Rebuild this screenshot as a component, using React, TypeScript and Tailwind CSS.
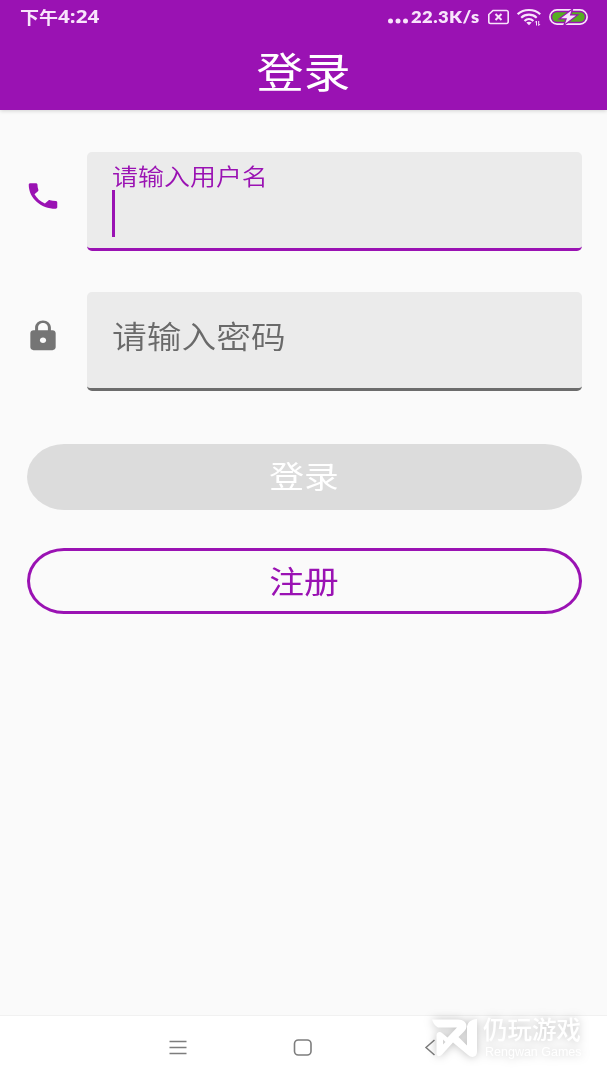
import type { ReactNode } from "react";

const PHONE_PATH =
  "M6.62 10.79c1.44 2.83 3.76 5.14 6.59 6.59l2.2-2.2c.27-.27.67-.36 1.02-.24 1.12.37 2.33.57 3.57.57.55 0 1 .45 1 1V20c0 .55-.45 1-1 1-9.39 0-17-7.61-17-17 0-.55.45-1 1-1h3.5c.55 0 1 .45 1 1 0 1.25.2 2.45.57 3.57.11.35.03.74-.25 1.02l-2.2 2.2z";
const LOCK_PATH =
  "M18 8h-1V6c0-2.76-2.24-5-5-5S7 3.24 7 6v2H6c-1.1 0-2 .9-2 2v10c0 1.1.9 2 2 2h12c1.1 0 2-.9 2-2V10c0-1.1-.9-2-2-2zm-6 9c-1.1 0-2-.9-2-2s.9-2 2-2 2 .9 2 2-.9 2-2 2zm3.1-9H8.9V6c0-1.71 1.39-3.1 3.1-3.1 1.71 0 3.1 1.39 3.1 3.1v2z";

type FieldRowProps = {
  path: string;
  iconClass: string;
  boxClass: string;
  children: ReactNode;
};

const FieldRow = ({ path, iconClass, boxClass, children }: FieldRowProps) => {
  return (
    <div className="flex h-[99px] items-start pr-[25px]">
      <div className="w-[86.5px] shrink-0 pt-[27px]">
        <svg
          viewBox="0 0 24 24"
          preserveAspectRatio="none"
          className={`ml-6 h-[34px] w-[38px] ${iconClass}`}
        >
          <path d={path} fill="currentColor" />
        </svg>
      </div>
      <div
        className={`h-full flex-1 overflow-hidden rounded-[5px] border-b-[3px] bg-[#ebebeb] pl-[25px] ${boxClass}`}
      >
        {children}
      </div>
    </div>
  );
};

const StatusBar = () => {
  return (
    <div className="flex h-[33px] items-center justify-between pl-[20px] pr-[19px] text-[#f8e4fb]">
      <span className="flex items-center whitespace-nowrap leading-none">
        <span className="w-[38px] origin-left scale-x-[1.12] font-['Noto_Sans_CJK_SC',sans-serif] text-[17px] font-bold leading-none">
          下午
        </span>
        <span className="origin-left scale-x-[1.18] font-['Open_Sans',sans-serif] text-[17.5px] font-bold leading-none">
          4:24
        </span>
      </span>
      <div className="flex items-center">
        <svg viewBox="0 0 22 6" className="mr-px mt-[9px] h-[6px] w-[22px]">
          <circle cx="2.5" cy="3" r="2.5" fill="currentColor" />
          <circle cx="10" cy="3" r="2.5" fill="currentColor" />
          <circle cx="17.5" cy="3" r="2.5" fill="currentColor" />
        </svg>
        <span className="flex h-[18px] w-[71px] items-center whitespace-nowrap">
          <span className="origin-left scale-x-[1.05] font-['Lato',sans-serif] text-[17.5px] font-extrabold leading-none tracking-[0.4px]">
            22.3K/s
          </span>
        </span>
        <svg viewBox="0 0 22 16" className="ml-[6px] h-4 w-[22px]" fill="none" stroke="currentColor">
          <path d="M5 1.5H18.5a1.7 1.7 0 0 1 1.7 1.7v9.6a1.7 1.7 0 0 1-1.7 1.7H2.5a1.7 1.7 0 0 1-1.7-1.7V5.5z" strokeWidth="1.6" />
          <path d="M7.5 5l6 6M13.5 5l-6 6" strokeWidth="2" />
        </svg>
        <svg viewBox="0 0 26 18" className="ml-[7px] h-[18px] w-[26px]" fill="none" stroke="currentColor">
          <path d="M.7 6.2c6-5.6 16.5-5.6 22.5 0" strokeWidth="2.2" />
          <path d="M4.2 9.7c4.3-4 11.2-4 15.5 0" strokeWidth="2.2" />
          <path d="M7.5 13c2.6-2.4 6.3-2.4 8.900 0" strokeWidth="2.2" />
          <path d="M12 17.300l-2.700-2.700c1.600-1.200 3.800-1.200 5.400 0z" fill="currentColor" stroke="none" />
          <path d="M19.500 17.500v-4.500l-1.200 1.400M21.700 13v4.500l1.300-1.400" strokeWidth="1" />
        </svg>
        <svg viewBox="0 0 39 16" className="ml-[6px] h-4 w-[39px]">
          <rect x="0.9" y="0.9" width="37.2" height="14.2" rx="7.1" fill="none" stroke="currentColor" strokeWidth="1.7" />
          <rect x="3.2" y="3.2" width="32.6" height="9.6" rx="4.8" fill="#56ad23" />
          <path
            d="M22.5 1.5L12 9.3h6L16 14.8l11-8.3h-6.2z"
            fill="currentColor"
            stroke="#9a12b3"
            strokeWidth="2.4"
            paintOrder="stroke"
          />
        </svg>
      </div>
    </div>
  );
};

const NavBar = () => {
  return (
    <nav className="flex h-[65px] items-center border-t border-[#f1f1f1] bg-white pb-[2px] pl-[169px] text-[#7d7d7d]">
      <svg viewBox="0 0 18 16" className="h-4 w-[18px]" stroke="currentColor" strokeWidth="1.4">
        <path d="M.5 2.500h17M.5 8.500h17M.5 14.500h17" />
      </svg>
      <svg viewBox="0 0 20 18" className="ml-[106px] h-[18px] w-5" fill="none" stroke="currentColor" strokeWidth="1.6">
        <rect x="1.500" y="2" width="16.500" height="15" rx="3.800" />
      </svg>
      <svg viewBox="0 0 12 18" className="ml-[111px] h-[18px] w-3" fill="none" stroke="currentColor" strokeWidth="1.500">
        <path d="M10.500 2L2 9.500l8.500 7.500" />
      </svg>
    </nav>
  );
};

const Watermark = () => {
  return (
    <div className="absolute bottom-[19px] right-[23px] flex h-[44px] w-[152px] items-start text-white [filter:drop-shadow(0_0_5px_rgba(0,0,0,0.26))]">
      <svg viewBox="0 0 47 40" className="mt-px h-10 w-[47px] shrink-0">
        <path
          d="M0 1.5H26c8 0 11 7 6 12L26.5 19 35 27.5V8.5C36 4 39 1.5 45 1V34c0 5-5 6.500-9 3L21 24.500 10 36.500C7 39.500 4.500 38 4.500 35V17.500c0-3 3-4.500 5.500-2.500l5.500 4.500L25 9.500H6C3 8 1 5 0 1.500z"
          fill="currentColor"
        />
        <path d="M11 21.500v5l2.500-2.500z" fill="#d4d4d4" />
      </svg>
      <div className="ml-[4px] flex flex-col">
        <span className="whitespace-nowrap font-['Noto_Sans_CJK_SC',sans-serif] text-[24.5px] font-medium leading-[23px]">
          仍玩游戏
        </span>
        <span className="ml-[2px] mt-[5px] whitespace-nowrap font-['Liberation_Sans',sans-serif] text-[12.5px] leading-[14px]">
          Rengwan Games
        </span>
      </div>
    </div>
  );
};

const App = () => {
  return (
    <div className="relative flex h-[1080px] w-[607px] flex-col overflow-hidden bg-[#fafafa] font-['Noto_Sans_CJK_SC',sans-serif]">
      <header className="h-[110px] shrink-0 bg-[#9a12b3] shadow-[0_1px_4px_rgba(0,0,0,0.16)]">
        <StatusBar />
        <h1 className="scale-x-[1.12] text-center text-[42px] leading-[74px] text-white">
          登录
        </h1>
      </header>

      <main className="flex flex-1 flex-col pt-[41.5px]">
        <FieldRow path={PHONE_PATH} iconClass="text-[#9a12b3]" boxClass="border-[#9a12b3]">
          <label className="block h-[38px] origin-left scale-x-[1.12] pt-[7px] text-[23.2px] font-[350] leading-[32px] text-[#9a12b3]">
            请输入用户名
          </label>
          <div className="h-[47px] w-[3.5px] bg-[#9a12b3]" />
        </FieldRow>
        <div className="h-[41.5px]" />
        <FieldRow path={LOCK_PATH} iconClass="text-[#757575]" boxClass="border-[#6c6c6c]">
          <label className="block origin-left scale-x-[1.12] text-[31px] font-[350] leading-[86px] text-[#6a6a6a]">
            请输入密码
          </label>
        </FieldRow>

        <div className="mt-[52.5px] flex flex-col gap-[38.5px] pl-[26.5px] pr-[25px] text-[31px]">
          <button className="flex h-[66px] items-center justify-center rounded-[37px/33px] bg-[#dcdcdc] pb-[4px] pr-px text-white">
            <span className="scale-x-[1.12] leading-none">登录</span>
          </button>
          <button className="flex h-[66px] items-center justify-center rounded-[37px/33px] border-[3px] border-[#9a12b3] pb-[4px] pr-px text-[#9a12b3]">
            <span className="scale-x-[1.12] leading-none">注册</span>
          </button>
        </div>
      </main>

      <NavBar />
      <Watermark />
    </div>
  );
};

export default App;
